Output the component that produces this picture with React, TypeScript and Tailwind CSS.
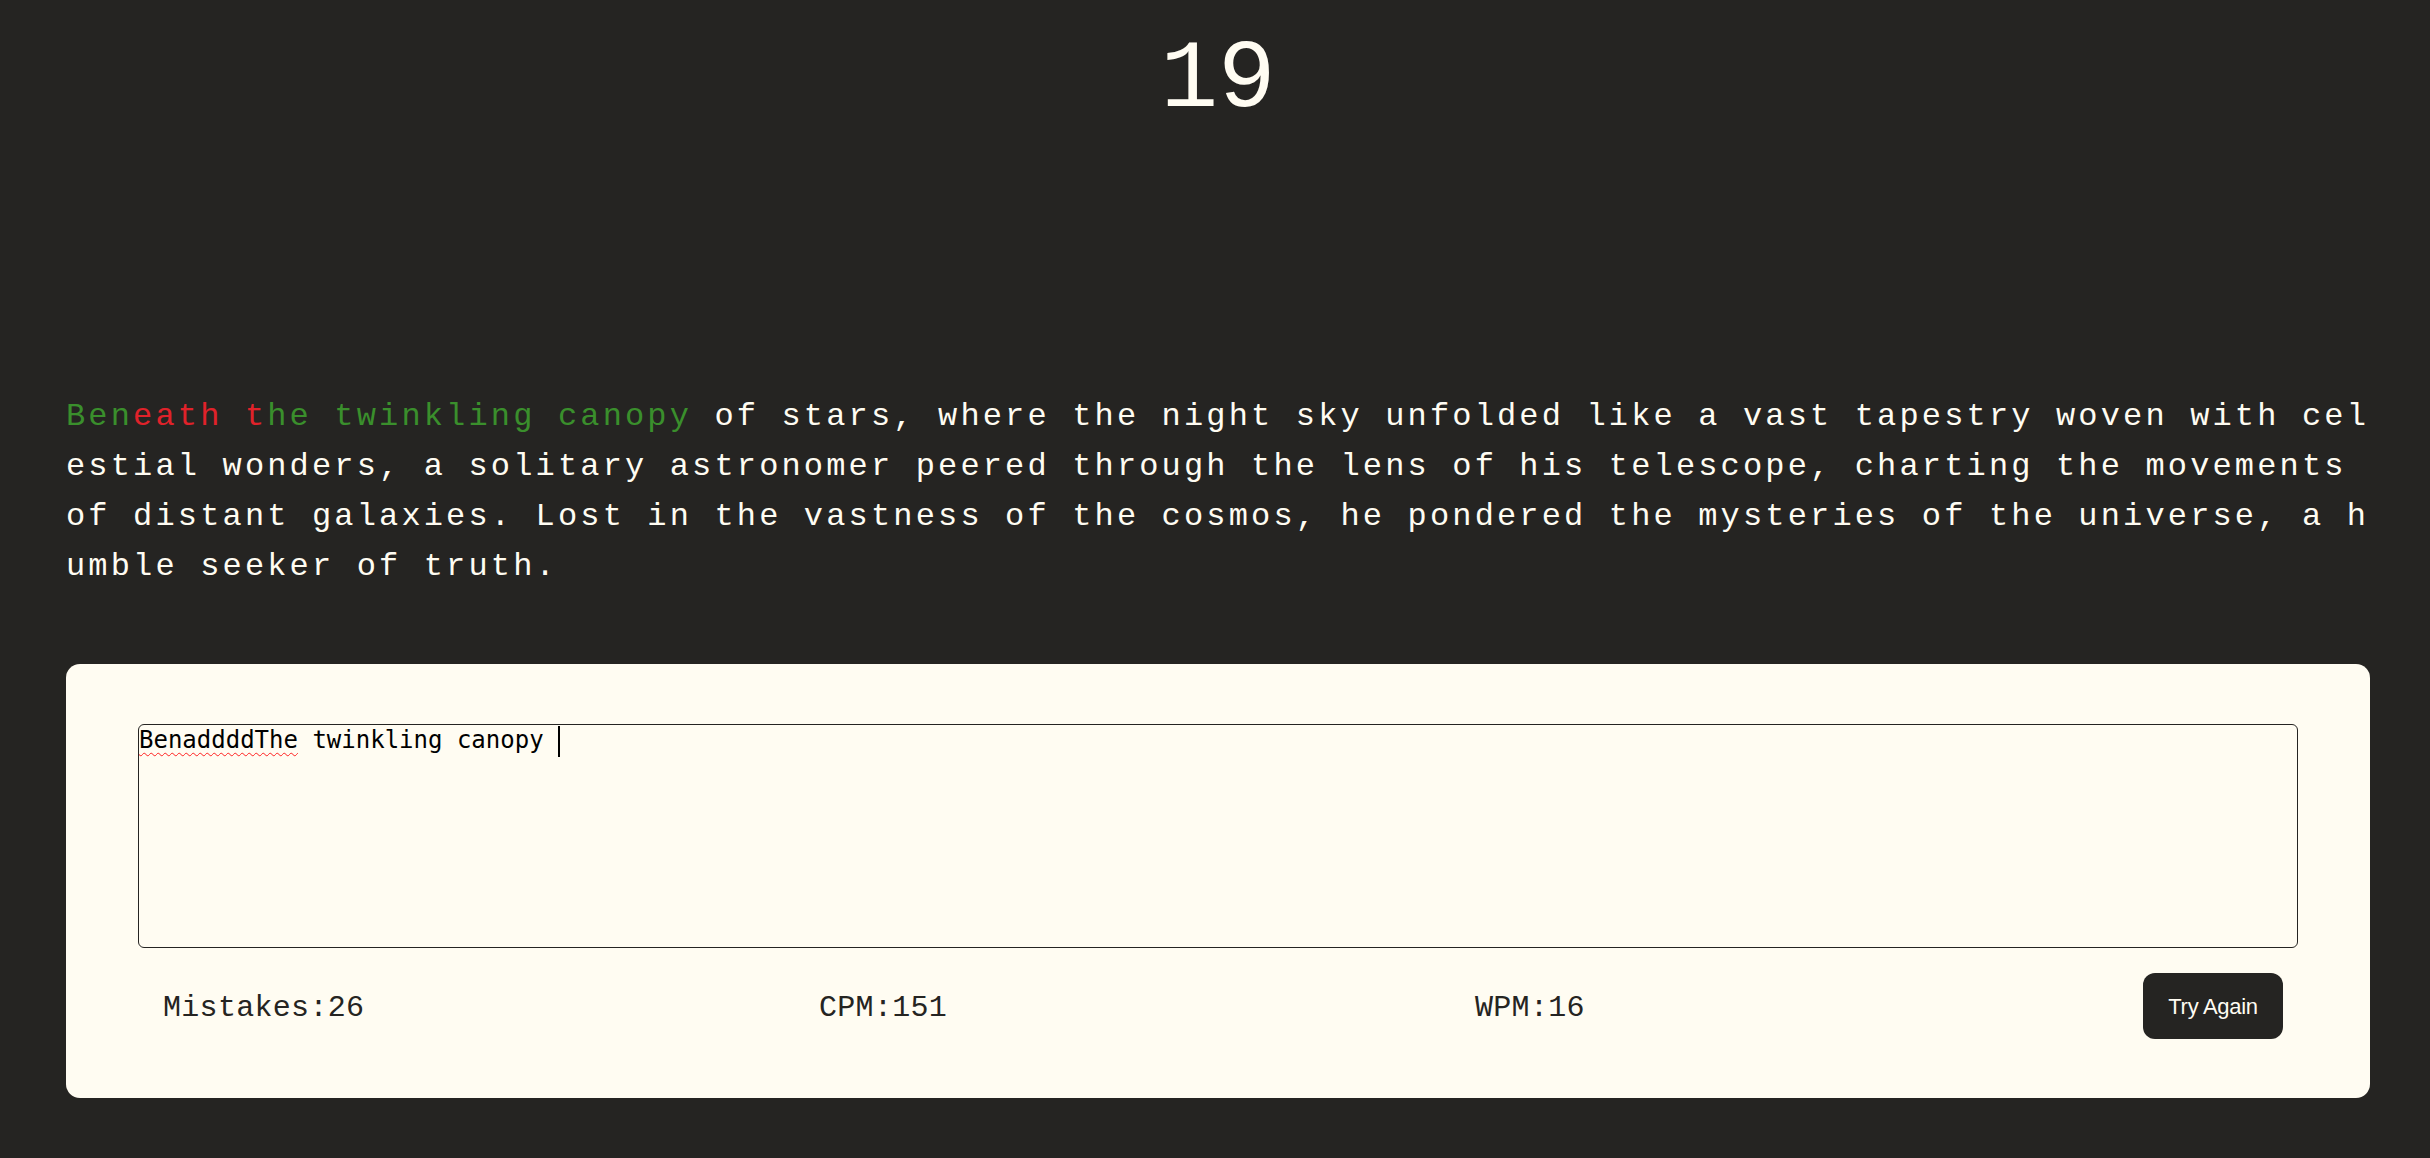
import React from 'react';

const passage =
  'Beneath the twinkling canopy of stars, where the night sky unfolded like a vast tapestry woven with celestial wonders, a solitary astronomer peered through the lens of his telescope, charting the movements of distant galaxies. Lost in the vastness of the cosmos, he pondered the mysteries of the universe, a humble seeker of truth.';

const typed = 'BenaddddThe twinkling canopy ';

const mono = { fontFamily: '"Liberation Mono", "DejaVu Sans Mono", monospace' };

function Passage() {
  return (
    <p
      className="mt-[263px] break-all text-[32px] leading-[50px] tracking-[3.15px] text-[#fffcf2]"
      style={mono}
    >
      {passage.split('').map((ch, i) => {
        let color = '';
        if (i < typed.length) {
          color = ch === typed[i] ? 'text-[#3a8f2c]' : 'text-[#e0222a]';
        }
        return (
          <span key={i} className={color}>
            {ch}
          </span>
        );
      })}
    </p>
  );
}

function Stat({ label, value }: { label: string; value: number }) {
  return (
    <div className="w-[656px] pt-[5px] text-[30px] tracking-[0.3px] text-[#252422]" style={mono}>
      {label}:{value}
    </div>
  );
}

export default function App() {
  return (
    <div className="min-h-screen bg-[#252422] pl-[66px] pr-[60px] pb-[60px]">
      <div
        className="h-[129px] pt-[33px] text-center text-[96px] leading-none text-[#fffcf2]"
        style={mono}
      >
        19
      </div>

      <Passage />

      <div className="mt-[72px] rounded-[14px] bg-[#fffcf2] px-[72px] pt-[60px] pb-[59px]">
        <div
          className="h-[224px] rounded-[6px] border border-[#252422] px-0 pt-[1px] text-[24px] leading-[28px] text-black"
          style={{ fontFamily: '"DejaVu Sans Mono", monospace' }}
        >
          <span className="underline decoration-wavy decoration-[#ff2020] decoration-1 underline-offset-[4px]">
            BenaddddThe
          </span>{' '}
          twinkling canopy{' '}
          <span className="inline-block h-[31px] w-[2px] align-top bg-black" />
        </div>

        <div className="mt-[25px] flex h-[66px] items-center pl-[25px] pr-[15px]">
          <Stat label="Mistakes" value={26} />
          <Stat label="CPM" value={151} />
          <Stat label="WPM" value={16} />
          <button
            className="ml-auto h-[66px] w-[140px] rounded-[12px] bg-[#252422] text-[22px] tracking-[-0.3px] text-[#fffcf2]"
            style={{ fontFamily: '"Liberation Sans", Arial, sans-serif' }}
          >
            Try Again
          </button>
        </div>
      </div>
    </div>
  );
}
